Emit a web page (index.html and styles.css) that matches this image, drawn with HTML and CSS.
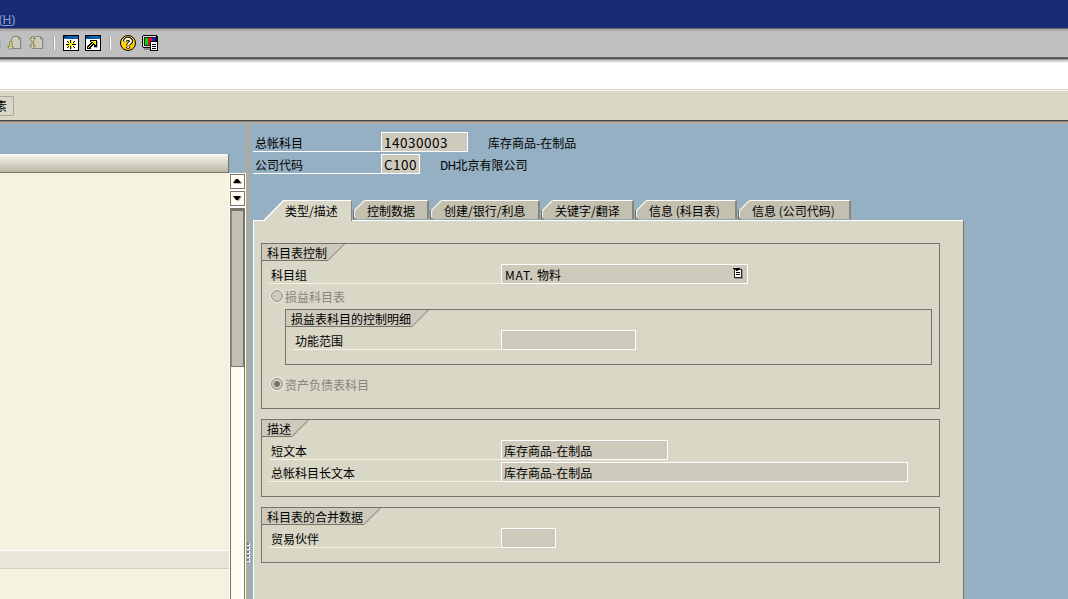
FILE: index.html
```html
<!DOCTYPE html>
<html lang="zh-CN">
<head>
    <meta charset="UTF-8">
    <title>总帐科目</title>
    <link rel="stylesheet" href="styles.css">
</head>
<body>

    <!-- 菜单栏 -->
    <div class="menubar"><span>(<u>H</u>)</span></div>

    <!-- 标准工具栏 -->
    <div class="toolbar">
        <i class="stub"></i>
        <svg class="icon i-next" width="16" height="16" viewBox="0 0 16 16">
            <path d="M7 1h6l2 2v10H5V3z" fill="#a9aed0"/>
            <path d="M6.500 .5h5l2 2.500v9.500h-9V3z" fill="#cfcdb9" stroke="#87877d"/>
            <path d="M11.500 .5v2.500h2" fill="none" stroke="#87877d"/>
            <path d="M2.500 5.500h2.500v5h1.500l-3 3.500-3-3.500h2z" fill="#d6d47e" stroke="#8b8b70"/>
        </svg>
        <svg class="icon i-last" width="16" height="16" viewBox="0 0 16 16">
            <path d="M7 1h6l2 2v10H5V3z" fill="#a9aed0"/>
            <path d="M6.500 .5h5l2 2.500v9.500h-9V3z" fill="#cfcdb9" stroke="#87877d"/>
            <path d="M11.500 .5v2.500h2" fill="none" stroke="#87877d"/>
            <path d="M.5 2.500h2v-2h2v2h2l-3 3.500zM.5 9.500h2v-2h2v2h2l-3 3.500z" fill="#d6d47e" stroke="#8b8b70"/>
        </svg>
        <i class="sep"></i>
        <svg class="icon i-new" width="16" height="16" viewBox="0 0 16 16" shape-rendering="crispEdges">
            <path d="M0 0h16v16H0z" fill="#000"/>
            <path d="M1 1h14v3H1z" fill="#0b64ae"/>
            <path d="M1 1h3v2H1zM5 3h1v1H5zM7 3h1v1H7zM9 3h1v1H9z" fill="#063e83"/>
            <path d="M1 4h14v11H1z" fill="#fff"/>
            <path d="M7 5h1v3H7zM7 11h1v3H7zM3 9h3v1H3zM9 9h4v1H9zM4 6h1v1H4zM5 7h1v1H5zM10 7h1v1h-1zM11 6h1v1h-1zM5 11h1v1H5zM4 12h1v1H4zM10 11h1v1h-1zM11 12h1v1h-1z" fill="#000"/>
            <path d="M6 8h3v3H6zM8 5h1v3H8zM8 11h1v3H8zM3 10h3v1H3zM9 8h3v1H9zM5 6h1v1H5zM10 6h1v1h-1zM5 12h1v1H5zM10 12h1v1h-1z" fill="#efe600"/>
        </svg>
        <svg class="icon i-link" width="16" height="16" viewBox="0 0 16 16" shape-rendering="crispEdges">
            <path d="M0 0h16v16H0z" fill="#000"/>
            <path d="M1 1h14v3H1z" fill="#0b64ae"/>
            <path d="M1 1h3v2H1zM5 3h1v1H5zM7 3h1v1H7zM9 3h1v1H9z" fill="#063e83"/>
            <path d="M1 4h14v11H1z" fill="#fff"/>
            <path d="M5 5h7v7H9v-2H8v1H7v1H6v2H2v-3h1v-1h1V9h1V8h1V7H5z" fill="#000"/>
            <path d="M6 6h5v4h-1V9H9V8H8v1H7v1H6v1H5v1H4v1H3v-1h1v-1h1v-1h1V9h1V8h1V7H6z" fill="#f7ee00"/>
            <path d="M12 6h1v7H9v-1h3z" fill="#b9bccb"/>
        </svg>
        <i class="sep"></i>
        <svg class="icon i-help" width="16" height="16" viewBox="0 0 16 16">
            <circle cx="8" cy="8" r="7.500" fill="#ffd000" stroke="#000"/>
            <path d="M2 11A7 7 0 0 0 14 11L12 13Q8 16 4 13Z" fill="#ef9b00"/>
            <path d="M3 4Q5 2 8 2L6 5 2 9Z" fill="#fff27a"/>
            <path d="M5 6.500C5 2.800 11 2.800 11 6.300 11 8.300 8.200 8 8.200 10.300M8.200 11.500v2" fill="none" stroke="#000" stroke-width="4"/>
            <path d="M5 6.500C5 2.800 11 2.800 11 6.300 11 8.300 8.200 8 8.200 10M8.200 11.500v1.500" fill="none" stroke="#fff" stroke-width="2"/>
        </svg>
        <svg class="icon i-layout" width="16" height="16" viewBox="0 0 16 16" shape-rendering="crispEdges">
            <path d="M1 0h14v1h1v12H1v-1H0V1h1z" fill="#000"/>
            <path d="M1 1h13v11H1z" fill="#d8d8d0"/>
            <path d="M2 2h12v9H2z" fill="#222"/>
            <path d="M3 3h3v7H3z" fill="#00d900"/>
            <path d="M6 3h4v7H6z" fill="#ee0020"/>
            <path d="M10 3h3v7h-3z" fill="#1a22e8"/>
            <path d="M2 13h8v2H2z" fill="#8c8c88"/>
            <path d="M8 6h8v10H8z" fill="#000"/>
            <path d="M9 7h6v8H9z" fill="#fff"/>
            <path d="M10 9h4v1h-4zM10 11h4v1h-4zM10 13h4v1h-4z" fill="#000"/>
        </svg>
    </div>

    <div class="command"></div>

    <!-- 应用工具栏 -->
    <div class="appbar"><button class="app-button">编辑财务报表版本要素</button></div>

    <div class="work">
        <!-- 左侧树 -->
        <div class="tree">
            <div class="tree-list">
                <div class="tree-head"></div>
                <div class="tree-body"><div class="tree-row"></div></div>
            </div>
            <div class="scroll">
                <div class="scroll-btn"><svg width="9" height="5" viewBox="0 0 9 5"><path d="M4 0h1l4 4v1H0V4z" fill="#b9b9ac" transform="translate(.8 .6)"/><path d="M3 0h2l3 4H0z"/></svg></div>
                <div class="scroll-btn"><svg width="9" height="5" viewBox="0 0 9 5"><path d="M0 0h8L5 4H3z" fill="#b9b9ac" transform="translate(1 1)"/><path d="M0 0h8L5 4H3z"/></svg></div>
                <div class="scroll-track"><div class="scroll-thumb"></div></div>
            </div>
        </div>
        <div class="splitter"><i></i><i></i><i></i><i></i><i></i></div>

        <!-- 右侧明细 -->
        <div class="detail">
            <div class="head-row">
                <label>总帐科目</label><span class="field w87 num">14030003</span><span class="head-text near">库存商品-在制品</span>
            </div>
            <div class="head-row">
                <label>公司代码</label><span class="field w39 num">C100</span><span class="head-text"><span class="dh">DH</span>北京有限公司</span>
            </div>

            <div class="tabs">
                <div class="tab active">
                    <svg width="21" height="21" viewBox="0 0 21 21"><path d="M0 21L1 19.500 18.500 1H21V21Z" fill="#d9d7c6"/><path d="M0 20.500L19.500 .5H21" fill="none" stroke="#fff" stroke-width="1.300"/></svg>
                    <span class="tab-text t1">类型/描述</span>
                </div>
                <div class="tab"><svg width="12" height="20" viewBox="0 0 12 20"><path d="M2 19L1 10 11 0h1v19z" fill="#c3c0b0"/><path d="M1.500 17V10.500L11.500 .5" fill="none" stroke="#f4f3ea" stroke-width="1.200"/><path d="M.5 10v9l3 .5" fill="none" stroke="#77756b"/></svg><span class="tab-text t2">控制数据</span></div>
                <div class="tab"><svg width="12" height="20" viewBox="0 0 12 20"><path d="M2 19L1 10 11 0h1v19z" fill="#c3c0b0"/><path d="M1.500 17V10.500L11.500 .5" fill="none" stroke="#f4f3ea" stroke-width="1.200"/><path d="M.5 10v9l3 .5" fill="none" stroke="#77756b"/></svg><span class="tab-text t3">创建/银行/利息</span></div>
                <div class="tab"><svg width="12" height="20" viewBox="0 0 12 20"><path d="M2 19L1 10 11 0h1v19z" fill="#c3c0b0"/><path d="M1.500 17V10.500L11.500 .5" fill="none" stroke="#f4f3ea" stroke-width="1.200"/><path d="M.5 10v9l3 .5" fill="none" stroke="#77756b"/></svg><span class="tab-text t4">关键字/翻译</span></div>
                <div class="tab"><svg width="12" height="20" viewBox="0 0 12 20"><path d="M2 19L1 10 11 0h1v19z" fill="#c3c0b0"/><path d="M1.500 17V10.500L11.500 .5" fill="none" stroke="#f4f3ea" stroke-width="1.200"/><path d="M.5 10v9l3 .5" fill="none" stroke="#77756b"/></svg><span class="tab-text t5">信息 (科目表)</span></div>
                <div class="tab"><svg width="12" height="20" viewBox="0 0 12 20"><path d="M2 19L1 10 11 0h1v19z" fill="#c3c0b0"/><path d="M1.500 17V10.500L11.500 .5" fill="none" stroke="#f4f3ea" stroke-width="1.200"/><path d="M.5 10v9l3 .5" fill="none" stroke="#77756b"/></svg><span class="tab-text t6">信息 (公司代码)</span></div>
            </div>

            <div class="panel">
                <div class="group g1">
                    <div class="title"><span>科目表控制</span><svg width="17" height="17" viewBox="0 0 17 17"><path d="M0 0h16L0 16z" fill="#cdcabb"/><path d="M0 16.500L16.500 0" fill="none" stroke="#77756b"/></svg></div>
                    <div class="row">
                        <label>科目组</label>
                        <span class="field w247"><span class="mat">MAT. </span>物料
                            <svg class="list" width="10" height="11" viewBox="0 0 10 11" shape-rendering="crispEdges"><path d="M2 2h8v9H2z" fill="#9b998e"/><path d="M1 1h8v9H1z" fill="#222"/><path d="M2 2h6v7H2z" fill="#fff"/><path d="M0 0h7v1H6v1H5v1H3V2H2V1H0zM3 4h4v1H3zM3 6h4v1H3z" fill="#000"/></svg>
                        </span>
                    </div>
                    <div class="radio-row"><i class="radio"></i>损益科目表</div>
                    <div class="group inner">
                        <div class="title"><span>损益表科目的控制明细</span><svg width="17" height="17" viewBox="0 0 17 17"><path d="M0 0h16L0 16z" fill="#cdcabb"/><path d="M0 16.500L16.500 0" fill="none" stroke="#77756b"/></svg></div>
                        <div class="row"><label>功能范围</label><span class="field w135"></span></div>
                    </div>
                    <div class="radio-row second"><i class="radio on"></i>资产负债表科目</div>
                </div>

                <div class="group g2">
                    <div class="title"><span>描述</span><svg width="17" height="17" viewBox="0 0 17 17"><path d="M0 0h16L0 16z" fill="#cdcabb"/><path d="M0 16.500L16.500 0" fill="none" stroke="#77756b"/></svg></div>
                    <div class="row"><label>短文本</label><span class="field w167">库存商品-在制品</span></div>
                    <div class="row"><label>总帐科目长文本</label><span class="field w407">库存商品-在制品</span></div>
                </div>

                <div class="group g3">
                    <div class="title"><span>科目表的合并数据</span><svg width="17" height="17" viewBox="0 0 17 17"><path d="M0 0h16L0 16z" fill="#cdcabb"/><path d="M0 16.500L16.500 0" fill="none" stroke="#77756b"/></svg></div>
                    <div class="row"><label>贸易伙伴</label><span class="field w55"></span></div>
                </div>
            </div>
        </div>
    </div>

</body>
</html>
```
FILE: styles.css
```css
* {
    box-sizing: border-box;
}

body {
    margin: 0;
    width: 1068px;
    height: 599px;
    overflow: hidden;
    display: flex;
    flex-direction: column;
    background: #94b0c2;
    font-family: "Noto Sans CJK SC", sans-serif;
    font-size: 12px;
    line-height: 18px;
    color: #000;
}

svg {
    display: block;
    flex: none;
}

/* 菜单栏 */
.menubar {
    height: 28px;
    flex: none;
    padding-top: 11px;
    background: #172a74;
    color: #8fa6cb;
    font-family: "Noto Sans", sans-serif;
    text-indent: -1px;
}

/* 工具栏 */
.toolbar {
    height: 32px;
    flex: none;
    display: flex;
    align-items: flex-start;
    padding-top: 7px;
    background: linear-gradient(#69697a 0, #69697a 1px, #a3a3a3 1px, #a9a9a9 2px, #bfbfbf 4px, #bfbfbf 29px, #8b8b8b 29px, #4b4b4b 30px, #4b4b4b 31px, #a0a0a0 31px);
}

.stub {
    width: 1px;
    height: 9px;
    margin-top: 5px;
    background: #a9aed0;
}

.sep {
    width: 2px;
    height: 13px;
    margin-top: 2px;
    border-left: 1px solid #a5a5a5;
    border-right: 1px solid #fff;
}

.i-next { margin: 1px 6px 0 6px; }
.i-last { margin: 1px 8px 0 0; }
.i-new { margin-left: 8px; }
.i-link { margin: 0 8px 0 6px; }
.i-help { margin-left: 9px; }
.i-layout { margin-left: 6px; }

.command {
    height: 31px;
    flex: none;
    background: linear-gradient(#c4c4c4 0, #e2e2e2 2px, #fff 3px, #fff 29px, #d8d6d0 29px, #d8d6d0 30px, #f5f4ee 30px);
}

.appbar {
    height: 33px;
    flex: none;
    display: flex;
    align-items: flex-start;
    overflow: hidden;
    padding-top: 5px;
    background: linear-gradient(#d9d7c6 0, #d9d7c6 29px, #46443f 29px, #46443f 30px, #8b887e 30px, #8b887e 31px, #b4ad9f 31px);
}

.app-button {
    width: 134px;
    height: 20px;
    margin-left: -120px;
    padding: 0 6px 0 0;
    flex: none;
    border: 1px solid #a9a799;
    border-radius: 1px;
    background: #d9d7c6;
    font: 12px/18px "Noto Sans CJK SC", sans-serif;
    text-align: right;
}

.work {
    flex: 1;
    display: flex;
    min-height: 0;
}

/* 左侧树 */
.tree {
    width: 246px;
    display: flex;
    padding-top: 30px;
}

.tree-list {
    width: 229px;
    display: flex;
    flex-direction: column;
}

.tree-head {
    height: 19px;
    border: solid #77756b;
    border-width: 0 1px 1px 0;
    background: linear-gradient(#fff 0, #eeede2 3px, #b9b7a5 100%);
}

.tree-body {
    flex: 1;
    padding-top: 377px;
    background: #f5f3e0;
}

.tree-row {
    height: 19px;
    background: #e9e8d8;
    border-top: 1px solid #fff;
    border-bottom: 1px solid #d3d1c4;
}

.scroll {
    width: 17px;
    margin-top: 19px;
    padding: 1px 1px 0 1px;
    background: #fff;
    display: flex;
    flex-direction: column;
}

.scroll-btn {
    height: 15px;
    margin-bottom: 2px;
    display: flex;
    align-items: center;
    justify-content: center;
    border: 1px solid #77756b;
    background: #fffff2;
}

.scroll-track {
    flex: 1;
    border: solid #77756b;
    border-width: 1px 1px 0 1px;
    background: #fefeee;
}

.scroll-thumb {
    height: 158px;
    border: 1px solid #77756b;
    border-top-width: 2px;
    border-left: 1px solid #8f8d82;
    background: #c3c0b0;
}

.splitter {
    width: 4px;
    background: #adaba0;
    display: flex;
    flex-direction: column;
    align-items: center;
    gap: 1px;
    padding-top: 419px;
}

.splitter i {
    width: 3px;
    height: 3px;
    background: #77756b;
    border: solid #fff;
    border-width: 0 1px 1px 0;
}

/* 抬头数据 */
.detail {
    flex: 1;
    padding: 8px 0 0 3px;
    display: flex;
    flex-direction: column;
}

.head-row {
    height: 20px;
    margin-bottom: 2px;
    display: flex;
}

.head-row label {
    width: 128px;
    padding: 2px 0 0 2px;
    border-bottom: 1px solid #fff;
}

.head-text {
    padding: 2px 0 0 20px;
}

.field {
    height: 20px;
    border: 1px solid #fff;
    background: #cdcabb;
    padding: 1px 0 0 2px;
    white-space: pre;
    line-height: 18px;
}

.num {
    padding-top: 0;
    font-size: 13.500px;
    letter-spacing: 0.500px;
}

.dh {
    letter-spacing: -0.700px;
}

.w39 { width: 39px; }
.w55 { width: 55px; }
.w87 { width: 87px; }
.w135 { width: 135px; }
.w167 { width: 167px; }
.w247 { width: 247px; }
.w407 { width: 407px; }

/* 页签 */
.tabs {
    height: 20px;
    margin: 24px 0 0 11px;
    display: flex;
}

.tab {
    display: flex;
    height: 20px;
    margin-right: 1px;
}

.tab-text {
    height: 19px;
    line-height: 20px;
    border-top: 1px solid #fff;
    border-right: 2px solid #88867b;
    background: #c3c0b0;
    box-shadow: 0 1px #89a3b5;
    white-space: nowrap;
}

.active {
    height: 21px;
    position: relative;
    z-index: 1;
}

.active .tab-text {
    height: 21px;
    background: #d9d7c6;
    border-right-width: 1px;
    box-shadow: none;
}

.t1 { width: 67px; }
.t2 { width: 64px; padding-left: 2px; }
.t3 { width: 98px; padding-left: 2px; }
.t4 { width: 81px; padding-left: 2px; }
.t5 { width: 90px; padding-left: 2px; }
.t6 { width: 101px; padding-left: 2px; }

.panel {
    width: 711px;
    flex: 1;
    padding: 22px 0 0 7px;
    border: solid #fff;
    border-width: 1px 0 0 1px;
    border-right: 1px solid #77756b;
    background: #d9d7c6;
}

/* 分组框 */
.group {
    width: 679px;
    margin-bottom: 10px;
    border: 1px solid #77756b;
}

.g1 { height: 166px; }
.g2 { height: 78px; }
.g3 { height: 56px; }

.inner {
    width: 647px;
    height: 56px;
    margin: 1px 0 0 23px;
}

.title {
    display: flex;
    height: 17px;
    margin-bottom: 3px;
}

.title span {
    padding: 0 1px 0 5px;
    line-height: 17px;
    background: #cdcabb;
    border-bottom: 1px solid #77756b;
}

.row {
    display: flex;
    height: 20px;
    margin: 0 0 2px 7px;
}

.row label {
    width: 232px;
    padding: 2px 0 0 2px;
    border-bottom: 1px solid #f5f3e0;
}

.inner .row label {
    width: 208px;
}

.mat {
    letter-spacing: 0.800px;
    padding-left: 1px;
}

.w247 {
    display: flex;
    white-space: pre;
}

.list {
    margin: 2px 4px 0 auto;
}

.radio-row {
    display: flex;
    height: 22px;
    padding: 2px 0 0 9px;
    color: #87857a;
}

.second {
    padding-top: 11px;
    height: 32px;
}

.radio {
    width: 12px;
    height: 12px;
    margin: 2px 2px 0 0;
    border: 1px solid #8f8d82;
    border-radius: 50%;
    background: #cdcabb;
    box-shadow: 0 0 0 1px #f5f3e0;
}

.on {
    background: radial-gradient(circle, #77756b 0, #77756b 2.500px, #cdcabb 3.500px);
}
```
